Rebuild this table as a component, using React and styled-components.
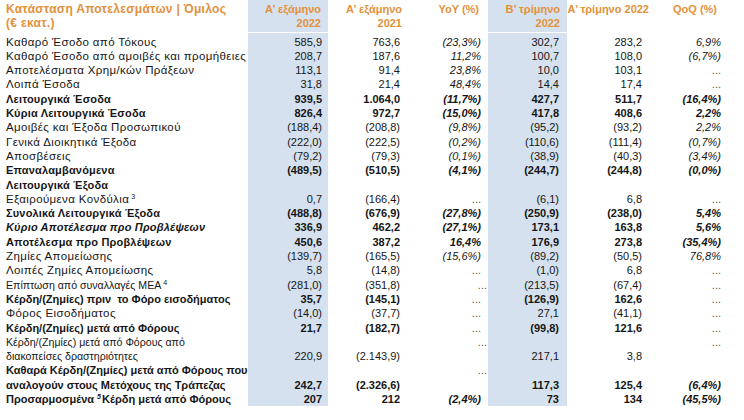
import React from "react";
import styled, { createGlobalStyle, css } from "styled-components";

const Global = createGlobalStyle`
  html, body { margin: 0; padding: 0; background: #fff; }
  body { font-family: "Liberation Sans", Arial, sans-serif; color: #161616; }
`;

const COLS = "248px 80px 74px 86px 79px 82px 75px";
const SHADE = "#d5e1ee";
const ORANGE = "#e3913a";
const LH = 14.3;

const Table = styled.div`
  width: 744px;
  font-size: 11px;
`;

const HeaderRow = styled.div`
  display: grid;
  grid-template-columns: ${COLS};
  height: 32px;
  border-bottom: 1px solid #fff;
  color: ${ORANGE};
  font-weight: bold;
  line-height: 14px;
`;

const HeadCell = styled.div`
  padding-top: 2px;
  padding-right: ${(p) => p.$pr || 0}px;
  padding-left: ${(p) => p.$pl || 0}px;
  text-align: ${(p) => (p.$left ? "left" : "right")};
  white-space: nowrap;
  font-size: ${(p) => (p.$left ? "12px" : "11px")};
  letter-spacing: ${(p) => (p.$left ? "0.3px" : "0")};
  background: ${(p) => (p.$shaded ? SHADE : "transparent")};
`;

const Body = styled.div`
  display: flex;
  flex-direction: column;
`;

const Row = styled.div`
  display: grid;
  grid-template-columns: ${COLS};
  line-height: ${LH}px;
  font-weight: ${(p) => (p.$bold ? "bold" : "normal")};
  &:first-child > div { padding-top: 1.6px; }
`;

const Label = styled.div`
  padding-left: 6px;
  white-space: nowrap;
  font-style: ${(p) => (p.$italic ? "italic" : "normal")};
  font-size: ${(p) => (p.$small ? "10.6px" : p.$bold ? "11px" : "11.5px")};
  letter-spacing: ${(p) =>
    p.$small || p.$tight ? "0" : p.$bold ? "0.18px" : "0.38px"};
`;

const Cell = styled.div`
  display: flex;
  flex-direction: column;
  justify-content: ${(p) => (p.$bottom ? "flex-end" : "flex-start")};
  align-items: flex-end;
  padding-right: ${(p) => p.$pr}px;
  white-space: nowrap;
  background: ${(p) => (p.$shaded ? SHADE : "transparent")};
  ${(p) =>
    p.$pct &&
    css`
      font-style: italic;
    `}
`;

const Dots = styled.span`
  color: #555;
  font-weight: normal;
  font-style: normal;
  margin-right: ${(p) => (p.$shift ? "-6px" : "0")};
`;

const Sup = styled.sup`
  font-size: 7px;
  line-height: 0;
  vertical-align: 4px;
  margin-left: ${(p) => (p.$before ? "3px" : "2px")};
  margin-right: ${(p) => (p.$before ? "1px" : "0")};
  font-style: ${(p) => (p.$italic ? "italic" : "normal")};
`;

const Tail = styled.div`
  display: grid;
  grid-template-columns: ${COLS};
  margin-top: 14px;
  height: 12px;
`;

const TailCell = styled.div`
  background: ${(p) => (p.$shaded ? "#e6edf5" : "transparent")};
`;

const colPr = [6, 2, 7, 8, 7, 3];
const headPr = [7, 0, 9, 7, 0, 7];
const shaded = [true, false, false, true, false, false];
const pct = [false, false, true, false, false, true];

const rows = [
  { label: "Καθαρό Έσοδο από Τόκους", v: ["585,9", "763,6", "(23,3%)", "302,7", "283,2", "6,9%"] },
  { label: "Καθαρό Έσοδο από αμοιβές και προμήθειες", v: ["208,7", "187,6", "11,2%", "100,7", "108,0", "(6,7%)"] },
  { label: "Αποτελέσματα Χρημ/κών Πράξεων", v: ["113,1", "91,4", "23,8%", "10,0", "103,1", "..."] },
  { label: "Λοιπά Έσοδα", v: ["31,8", "21,4", "48,4%", "14,4", "17,4", "..."] },
  { label: "Λειτουργικά Έσοδα", bold: true, v: ["939,5", "1.064,0", "(11,7%)", "427,7", "511,7", "(16,4%)"] },
  { label: "Κύρια Λειτουργικά Έσοδα", bold: true, v: ["826,4", "972,7", "(15,0%)", "417,8", "408,6", "2,2%"] },
  { label: "Αμοιβές και Έξοδα Προσωπικού", v: ["(188,4)", "(208,8)", "(9,8%)", "(95,2)", "(93,2)", "2,2%"] },
  { label: "Γενικά Διοικητικά Έξοδα", v: ["(222,0)", "(222,5)", "(0,2%)", "(110,6)", "(111,4)", "(0,7%)"] },
  { label: "Αποσβέσεις", v: ["(79,2)", "(79,3)", "(0,1%)", "(38,9)", "(40,3)", "(3,4%)"] },
  { label: ["Επαναλαμβανόμενα", "Λειτουργικά Έξοδα"], bold: true, v: ["(489,5)", "(510,5)", "(4,1%)", "(244,7)", "(244,8)", "(0,0%)"], pos: "tttttt" },
  { label: "Εξαιρούμενα Κονδύλια", sup: "3", v: ["0,7", "(166,4)", "...", "(6,1)", "6,8", "..."] },
  { label: "Συνολικά Λειτουργικά Έξοδα", bold: true, v: ["(488,8)", "(676,9)", "(27,8%)", "(250,9)", "(238,0)", "5,4%"] },
  { label: "Κύριο Αποτέλεσμα προ Προβλέψεων", bold: true, italic: true, v: ["336,9", "462,2", "(27,1%)", "173,1", "163,8", "5,6%"] },
  { label: "Αποτέλεσμα προ Προβλέψεων", bold: true, v: ["450,6", "387,2", "16,4%", "176,9", "273,8", "(35,4%)"] },
  { label: "Ζημίες Απομείωσης", v: ["(139,7)", "(165,5)", "(15,6%)", "(89,2)", "(50,5)", "76,8%"] },
  { label: "Λοιπές Ζημίες Απομείωσης", v: ["5,8", "(14,8)", "...", "(1,0)", "6,8", "..."] },
  { label: "Επίπτωση από συναλλαγές ΜΕΑ", small: true, sup: "4", v: ["(281,0)", "(351,8)", "...", "(213,5)", "(67,4)", "..."], shift: [2] },
  { label: "Κέρδη/(Ζημίες) πριν\u00a0 το Φόρο εισοδήματος", bold: true, tight: true, v: ["35,7", "(145,1)", "...", "(126,9)", "162,6", "..."] },
  { label: "Φόρος Εισοδήματος", v: ["(14,0)", "(37,7)", "...", "27,1", "(41,1)", "..."] },
  { label: "Κέρδη/(Ζημίες) μετά από Φόρους", bold: true, tight: true, v: ["21,7", "(182,7)", "...", "(99,8)", "121,6", "..."] },
  { label: ["Κέρδη/(Ζημίες) μετά από Φόρους από", "διακοπείσες δραστηριότητες"], small: true, v: ["220,9", "(2.143,9)", "...", "217,1", "3,8", "..."], pos: "bbtbbt", shift: [2] },
  { label: ["Καθαρά Κέρδη/(Ζημίες) μετά από Φόρους που", "αναλογούν στους Μετόχους της Τράπεζας"], bold: true, tight: true, v: ["242,7", "(2.326,6)", "...", "117,3", "125,4", "(6,4%)"], pos: "bbtbbb", shift: [2] },
  { label: "Προσαρμοσμένα", supBefore: "5", labelRest: "Κέρδη μετά από Φόρους", bold: true, tight: true, v: ["207", "212", "(2,4%)", "73", "134", "(45,5%)"] },
];

function LabelContent({ r }) {
  if (Array.isArray(r.label)) {
    return (
      <>
        {r.label[0]}
        <br />
        {r.label[1]}
      </>
    );
  }
  if (r.supBefore) {
    return (
      <>
        {r.label}
        <Sup $before $italic>{r.supBefore}</Sup>
        {r.labelRest}
      </>
    );
  }
  return (
    <>
      {r.label}
      {r.sup && <Sup>{r.sup}</Sup>}
    </>
  );
}

export default function App() {
  return (
    <>
      <Global />
      <Table>
        <HeaderRow>
          <HeadCell $left $pl={6}>
            Κατάσταση Αποτελεσμάτων | Όμιλος
            <br />
            (€ εκατ.)
          </HeadCell>
          <HeadCell $shaded $pr={headPr[0]}>
            Α’ εξάμηνο
            <br />
            2022
          </HeadCell>
          <HeadCell $pr={headPr[1]}>
            Α’ εξάμηνο
            <br />
            2021
          </HeadCell>
          <HeadCell $pr={headPr[2]}>YoY (%)</HeadCell>
          <HeadCell $shaded $pr={headPr[3]}>
            Β’ τρίμηνο
            <br />
            2022
          </HeadCell>
          <HeadCell $pr={headPr[4]}>Α’ τρίμηνο 2022</HeadCell>
          <HeadCell $pr={headPr[5]}>QoQ (%)</HeadCell>
        </HeaderRow>
        <Body>
          {rows.map((r, i) => (
            <Row key={i} $bold={r.bold}>
              <Label $italic={r.italic} $small={r.small} $bold={r.bold} $tight={r.tight}>
                <LabelContent r={r} />
              </Label>
              {r.v.map((v, j) => (
                <Cell
                  key={j}
                  $pr={colPr[j]}
                  $shaded={shaded[j]}
                  $pct={pct[j]}
                  $bottom={r.pos && r.pos[j] === "b"}
                >
                  {v === "..." ? (
                    <Dots $shift={r.shift && r.shift.includes(j)}>...</Dots>
                  ) : (
                    <span>{v}</span>
                  )}
                </Cell>
              ))}
            </Row>
          ))}
        </Body>
        <Tail>
          <TailCell />
          <TailCell $shaded />
        </Tail>
      </Table>
    </>
  );
}
